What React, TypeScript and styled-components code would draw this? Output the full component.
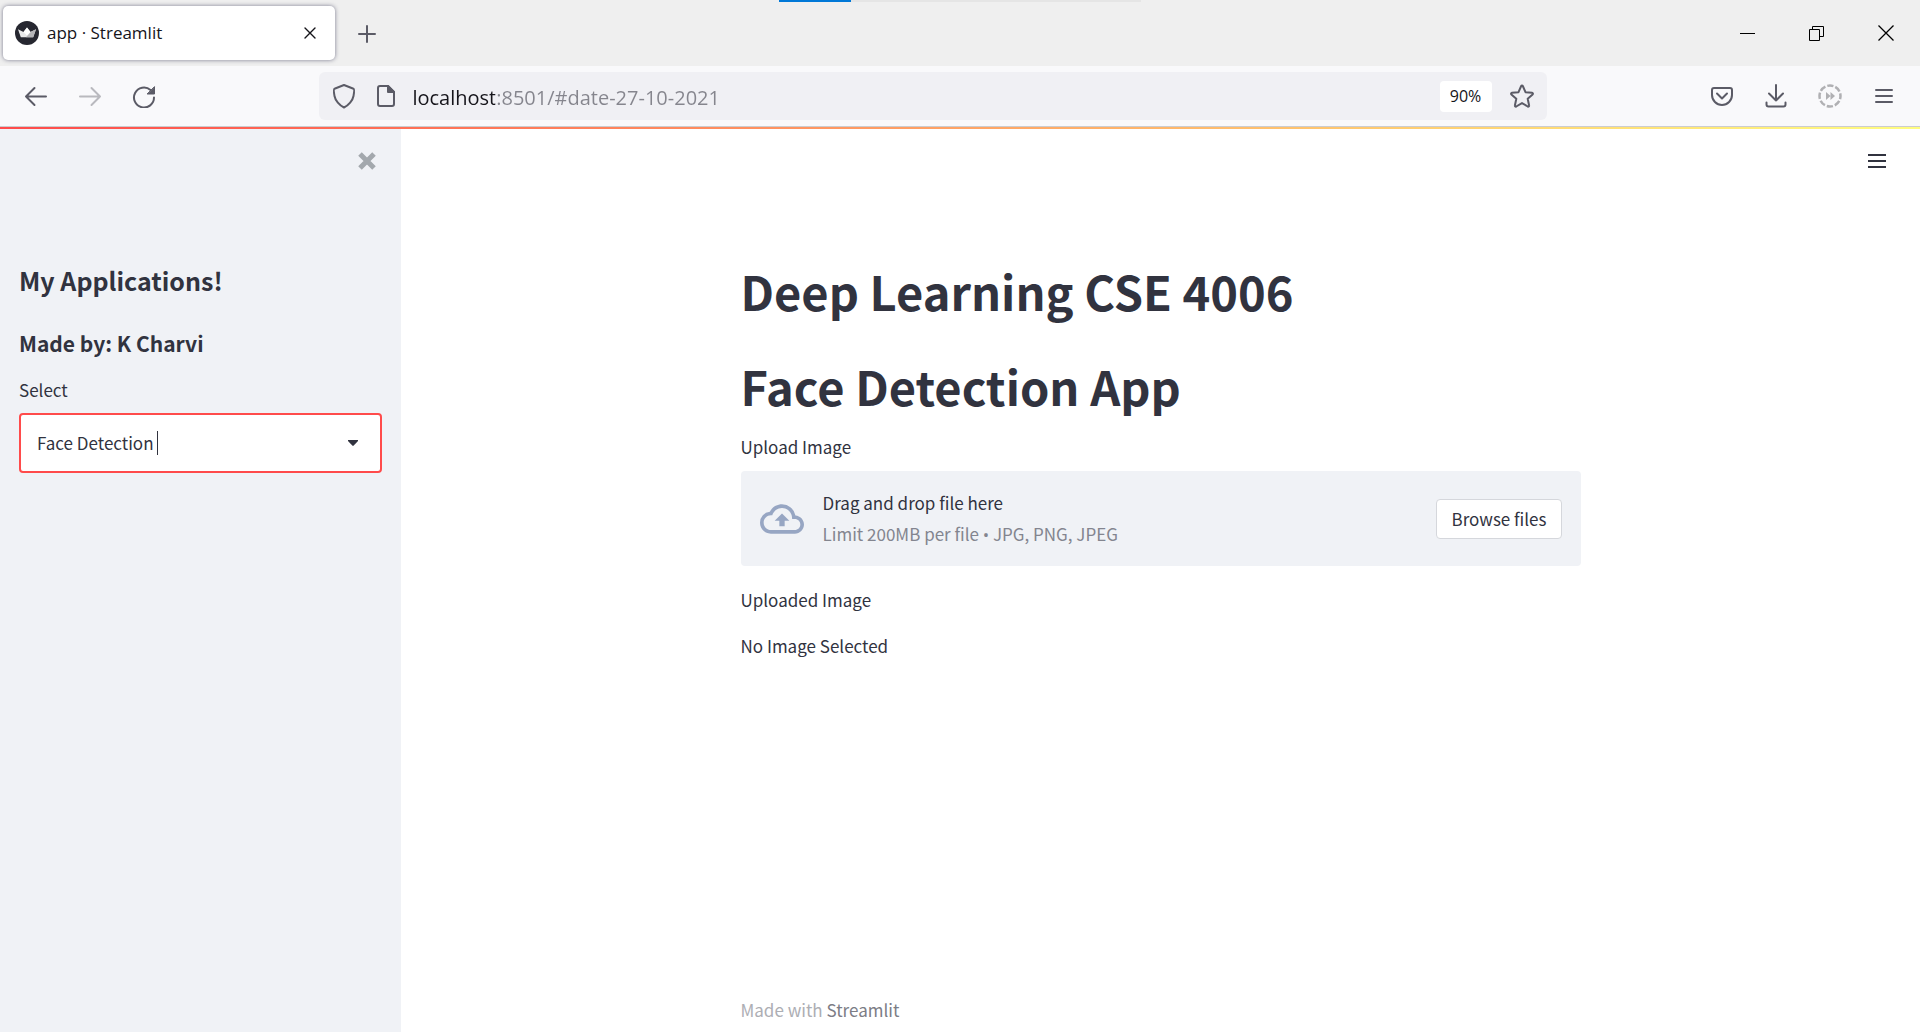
import React, { useState } from "react";
import styled, { createGlobalStyle } from "styled-components";

const chromeFont = `"Open Sans", "Noto Sans", sans-serif`;
const appFont = `"Noto Sans CJK SC", "Noto Sans", sans-serif`;
const ink = "#31333f";
const chromeInk = "#5b5b66";

const GlobalStyle = createGlobalStyle`
  *, *::before, *::after { box-sizing: border-box; }
  body { margin: 0; background: #fff; color: ${ink}; font-family: ${appFont}; font-size: 17px; line-height: 24px; }
  button, input, select { font: inherit; color: inherit; }
  h1, h2, h3, p { margin: 0; }
`;

const Window = styled.div`
  min-height: 100vh;
  display: flex;
  flex-direction: column;
`;

const TitleBar = styled.header`
  position: relative;
  height: 66px;
  display: flex;
  align-items: center;
  background: #efefef;
  font-family: ${chromeFont};
`;

const LoadStrip = styled.div`
  position: absolute;
  top: 0;
  left: 50%;
  width: 362px;
  height: 2px;
  transform: translateX(-50%);
  background: #e5e5e5;
  &::before {
    content: "";
    display: block;
    width: 72px;
    height: 2px;
    background: #0078d7;
  }
`;

const Tab = styled.div`
  width: 332px;
  height: 54px;
  margin-left: 3px;
  padding: 0 12px;
  display: flex;
  align-items: center;
  gap: 8px;
  background: #fff;
  border-radius: 5px;
  box-shadow: 0 0 4px rgba(60, 60, 90, 0.65);
  color: #15141a;
  font-size: 17px;
`;

const TabTitle = styled.span`
  flex: 1;
`;

const IconButton = styled.button<{ $w?: number; $h?: number; $color?: string }>`
  flex: none;
  width: ${(p) => p.$w ?? 54}px;
  height: ${(p) => p.$h ?? 48}px;
  padding: 0;
  display: flex;
  align-items: center;
  justify-content: center;
  border: 0;
  background: none;
  color: ${(p) => p.$color ?? chromeInk};
`;

const WindowControls = styled.div`
  display: flex;
  margin-left: auto;
`;

const Toolbar = styled.nav`
  height: 61px;
  padding: 0 9px;
  display: flex;
  align-items: center;
  background: #f9f9fb;
  border-bottom: 1px solid #cccccf;
  font-family: ${chromeFont};
`;

const FlexibleSpace = styled.div`
  flex: 149 1 0;
`;

const AddressBar = styled.div`
  flex: 1226 1 0;
  height: 48px;
  padding: 0 2px 0 4px;
  display: flex;
  align-items: center;
  background: #f0f0f4;
  border-radius: 6px;
`;

const AddressInput = styled.input`
  flex: 1;
  min-width: 0;
  height: 32px;
  margin-left: 5px;
  padding: 2px 0 0;
  border: 0;
  outline: 0;
  font-size: 20px;
  color: #15141a;
  background: linear-gradient(90deg, #15141a 83px, #85858d 83px);
  -webkit-background-clip: text;
  background-clip: text;
  -webkit-text-fill-color: transparent;
`;

const ZoomButton = styled.button`
  width: 52px;
  height: 31px;
  margin-right: 8px;
  padding: 0;
  border: 0;
  border-radius: 4px;
  background: #fff;
  color: #15141a;
  font-size: 16px;
`;

const Decoration = styled.div`
  height: 2px;
  background: linear-gradient(90deg, #ff4b4b, #fffd80);
`;

const AppView = styled.div`
  flex: 1;
  display: flex;
`;

const Sidebar = styled.aside`
  flex: none;
  width: 401px;
  padding: 0 19px;
  background: #f0f2f6;
`;

const PanelTop = styled.div`
  height: 64px;
  display: flex;
  align-items: center;
  justify-content: flex-end;
`;

const SidebarTitle = styled.h2`
  margin-top: 71px;
  font-size: 25px;
  line-height: 32px;
`;

const SidebarSubtitle = styled.h3`
  margin-top: 33px;
  font-size: 21px;
  line-height: 28px;
`;

const FieldLabel = styled.label<{ $top: number }>`
  display: block;
  margin-top: ${(p) => p.$top}px;
`;

const SelectBox = styled.div`
  position: relative;
  margin-top: 11px;
`;

const Select = styled.select`
  width: 100%;
  height: 60px;
  padding: 0 16px;
  appearance: none;
  border: 2px solid #ff4b4b;
  border-radius: 4px;
  outline: 0;
  background: #fff;
`;

const TextCaret = styled.span`
  position: absolute;
  top: 18px;
  left: 138px;
  width: 1px;
  height: 24px;
  background: ${ink};
  pointer-events: none;
`;

const DropArrow = styled.svg`
  position: absolute;
  top: 27px;
  right: 24px;
  pointer-events: none;
`;

const Main = styled.main`
  flex: 1;
  display: flex;
  flex-direction: column;
  align-items: center;
`;

const MainTop = styled(PanelTop)`
  width: 100%;
  padding-right: 23px;
`;

const Block = styled.section`
  width: 100%;
  max-width: 840px;
  margin-top: 68px;
`;

const PageTitle = styled.h1`
  font-size: 47px;
  line-height: 60px;
  & + & {
    margin-top: 35px;
  }
`;

const DropZone = styled.div`
  height: 95px;
  margin-top: 12px;
  padding: 0 19px;
  display: flex;
  align-items: center;
  background: #f0f2f6;
  border-radius: 4px;
`;

const DropText = styled.div`
  flex: 1;
  margin-left: 19px;
  display: flex;
  flex-direction: column;
  gap: 7px;
`;

const Hint = styled.span`
  color: #83858f;
`;

const Bullet = styled.span`
  font-family: "Open Sans", sans-serif;
`;

const BrowseButton = styled.button`
  height: 40px;
  padding: 0 14px;
  border: 1px solid #d5d7dc;
  border-radius: 4px;
  background: #fff;
`;

const Paragraph = styled.p`
  margin-top: 22px;
`;

const Footer = styled.footer`
  width: 100%;
  max-width: 840px;
  margin-top: auto;
  padding-bottom: 10px;
  color: #adaeb4;
`;

const FooterLink = styled.a`
  color: #7c7d86;
  text-decoration: none;
`;

const stroke = {
  fill: "none",
  stroke: "currentColor",
  strokeWidth: 2,
  strokeLinecap: "round" as const,
  strokeLinejoin: "round" as const,
};

const Crown = () => (
  <svg width="24" height="24" viewBox="0 0 24 24" aria-hidden="true">
    <circle cx="12" cy="12" r="12" fill="#262730" />
    <path d="M3 8.300 8.500 11 12 6.500 15.500 11 21 8.300 18.200 16.200H5.800z" fill="#e9e9ea" />
    <path d="M15.500 11 21 8.300 18.200 16.200H11z" fill="#b5b5b8" />
    <path d="M12 6.500 15.500 11 12 14.500 8.500 11z" fill="#fff" />
  </svg>
);

const Back = () => (
  <svg width="24" height="24" viewBox="0 0 24 24" {...stroke}><path d="M22 12.500H2M10.500 4 2 12.500l8.500 8.500" /></svg>
);
const Forward = () => (
  <svg width="24" height="24" viewBox="0 0 24 24" {...stroke}><path d="M2 12.500h20M13.500 4l8.500 8.500-8.500 8.500" /></svg>
);
const Reload = () => (
  <svg width="24" height="24" viewBox="0 0 24 24" {...stroke}>
    <path d="M22 13.500a10 10 0 1 1-3.500-7.600" />
    <path d="M22.500 3v7h-7z" fill="currentColor" strokeWidth="1" />
  </svg>
);
const Shield = () => (
  <svg width="24" height="26" viewBox="0 0 24 26" {...stroke}>
    <path d="M12 2 21.500 5.700C22.700 6.100 22 10 21.500 13c-.8 4.500-5 9.500-9.500 11.500C7.500 22.500 3.300 17.500 2.500 13 2 10 1.300 6.100 2.500 5.700z" />
  </svg>
);
const Page = () => (
  <svg width="20" height="24" viewBox="0 0 20 24" {...stroke}>
    <path d="M4 2h8l6 6v12a2 2 0 0 1-2 2H4a2 2 0 0 1-2-2V4a2 2 0 0 1 2-2z" />
    <path d="M12 2v6h6z" fill="currentColor" />
  </svg>
);
const Star = () => (
  <svg width="26" height="26" viewBox="0 0 26 26" {...stroke}>
    <path d="M12.200 3a.9.9 0 0 1 1.600 0l2.700 6.200 6.600.6a.9.9 0 0 1 .5 1.600l-4.900 4.400 1.400 6.700a.9.900 0 0 1-1.300 1L13 20.100l-5.800 3.400a.9.900 0 0 1-1.300-1l1.400-6.700-4.900-4.400a.9.900 0 0 1 .5-1.600l6.600-.6z" />
  </svg>
);
const Pocket = () => (
  <svg width="24" height="24" viewBox="0 0 24 24" {...stroke}>
    <path d="M4 4h16a2 2 0 0 1 2 2v5a10 10 0 0 1-20 0V6a2 2 0 0 1 2-2z" />
    <path d="m7 9.500 5 5 5-5" />
  </svg>
);
const Download = () => (
  <svg width="24" height="24" viewBox="0 0 24 24" {...stroke}>
    <path d="M12 1v15.500M5 9.500l7 7 7-7M2.500 18.500v2a2 2 0 0 0 2 2h15a2 2 0 0 0 2-2v-2" />
  </svg>
);
const SkipCircle = () => (
  <svg width="24" height="24" viewBox="0 0 24 24">
    <circle cx="12" cy="12" r="10.500" fill="none" stroke="currentColor" strokeWidth="2.500" strokeDasharray="6.250 2" strokeDashoffset="3.100" />
    <path d="M8 8v8l4.500-4zM12.500 8v8l4.500-4z" fill="currentColor" />
  </svg>
);
const Burger = () => (
  <svg width="20" height="18" viewBox="0 0 20 18" {...stroke}><path d="M2 3h16M2 9h16M2 15h16" /></svg>
);

export default function App() {
  const [url, setUrl] = useState("localhost:8501/#date-27-10-2021");
  return (
    <Window>
      <GlobalStyle />
      <TitleBar>
        <LoadStrip />
        <Tab>
          <Crown />
          <TabTitle>app · Streamlit</TabTitle>
          <IconButton $w={26} $h={26} $color="#15141a" aria-label="Close tab">
            <svg width="12" height="12" viewBox="0 0 12 12" {...stroke} strokeWidth={1.4}><path d="m1 1 10 10M11 1 1 11" /></svg>
          </IconButton>
        </Tab>
        <IconButton $w={64} aria-label="New tab">
          <svg width="18" height="20" viewBox="0 0 18 20" {...stroke}><path d="M9 3v16M1 11h16" /></svg>
        </IconButton>
        <WindowControls>
          <IconButton $w={69} $color="#000" aria-label="Minimize">
            <svg width="15" height="15" viewBox="0 0 15 15"><path d="M0 7.500h15" stroke="currentColor" fill="none" /></svg>
          </IconButton>
          <IconButton $w={69} $color="#000" aria-label="Restore">
            <svg width="15" height="15" viewBox="0 0 15 15" fill="none" stroke="currentColor"><path d="M.5 3.500h10v11H.5zM3.500 3.500v-3h11v10h-4" /></svg>
          </IconButton>
          <IconButton $w={69} $color="#000" aria-label="Close">
            <svg width="16" height="16" viewBox="0 0 16 16" fill="none" stroke="currentColor" strokeWidth="1.300"><path d="m.5.5 15 15M15.500.5l-15 15" /></svg>
          </IconButton>
        </WindowControls>
      </TitleBar>

      <Toolbar>
        <IconButton aria-label="Back"><Back /></IconButton>
        <IconButton $color="#b9b9be" aria-label="Forward"><Forward /></IconButton>
        <IconButton aria-label="Reload"><Reload /></IconButton>
        <FlexibleSpace />
        <AddressBar>
          <IconButton $w={42} aria-label="Tracking protection"><Shield /></IconButton>
          <IconButton $w={42} aria-label="Site information"><Page /></IconButton>
          <AddressInput aria-label="Address" value={url} onChange={(e) => setUrl(e.target.value)} spellCheck={false} />
          <ZoomButton>90%</ZoomButton>
          <IconButton $w={45} aria-label="Bookmark"><Star /></IconButton>
        </AddressBar>
        <FlexibleSpace />
        <IconButton aria-label="Save to Pocket"><Pocket /></IconButton>
        <IconButton aria-label="Downloads"><Download /></IconButton>
        <IconButton $color="#b0b0b3" aria-label="Skip"><SkipCircle /></IconButton>
        <IconButton aria-label="Open menu"><Burger /></IconButton>
      </Toolbar>

      <Decoration />

      <AppView>
        <Sidebar>
          <PanelTop>
            <IconButton $w={30} $h={30} $color="#a3a8ad" aria-label="Close sidebar">
              <svg width="18" height="18" viewBox="0 0 18 18" fill="none" stroke="currentColor" strokeWidth="5"><path d="m2 2 14 14M16 2 2 16" /></svg>
            </IconButton>
          </PanelTop>
          <SidebarTitle>My Applications!</SidebarTitle>
          <SidebarSubtitle>Made by: K Charvi</SidebarSubtitle>
          <FieldLabel $top={21} htmlFor="app-select">Select</FieldLabel>
          <SelectBox>
            <Select id="app-select">
              <option>Face Detection</option>
            </Select>
            <TextCaret />
            <DropArrow width="10" height="6" viewBox="0 0 10 6" aria-hidden="true">
              <path d="M0 1V0h10v1L5.500 5.700h-1z" fill={ink} />
            </DropArrow>
          </SelectBox>
        </Sidebar>

        <Main>
          <MainTop>
            <IconButton $w={40} $h={40} $color={ink} aria-label="App menu">
              <svg width="18" height="16" viewBox="0 0 18 16" fill="none" stroke="currentColor" strokeWidth="2"><path d="M0 2h18M0 8h18M0 14h18" /></svg>
            </IconButton>
          </MainTop>
          <Block>
            <PageTitle>Deep Learning CSE 4006</PageTitle>
            <PageTitle>Face Detection App</PageTitle>
            <FieldLabel $top={19} as="p" id="upload-label">Upload Image</FieldLabel>
            <DropZone role="group" aria-labelledby="upload-label">
              <svg width="44" height="44" viewBox="0 0 24 24" fill="#97a6c3" aria-hidden="true">
                <path d="M19.350 10.040A7.490 7.490 0 0 0 12 4C9.110 4 6.600 5.640 5.350 8.040A5.994 5.994 0 0 0 0 14c0 3.310 2.690 6 6 6h13c2.760 0 5-2.240 5-5 0-2.640-2.050-4.780-4.650-4.960zM19 18H6c-2.210 0-4-1.790-4-4s1.790-4 4-4h.71C7.370 7.690 9.480 6 12 6c3.040 0 5.500 2.460 5.500 5.500v.5H19c1.660 0 3 1.340 3 3s-1.340 3-3 3zM8 13h2.550v3h2.900v-3H16l-4-4z" />
              </svg>
              <DropText>
                <span>Drag and drop file here</span>
                <Hint>Limit 200MB per file <Bullet>•</Bullet> JPG, PNG, JPEG</Hint>
              </DropText>
              <BrowseButton>Browse files</BrowseButton>
            </DropZone>
            <Paragraph>Uploaded Image</Paragraph>
            <Paragraph>No Image Selected</Paragraph>
          </Block>
          <Footer>
            Made with <FooterLink href="#streamlit">Streamlit</FooterLink>
          </Footer>
        </Main>
      </AppView>
    </Window>
  );
}
